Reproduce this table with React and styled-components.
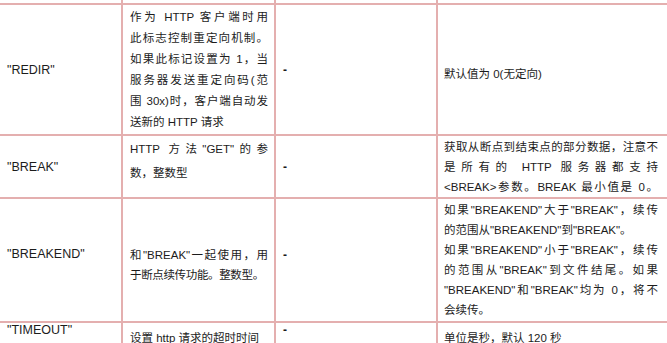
import React from "react";
import styled, { createGlobalStyle } from "styled-components";

const GlobalStyle = createGlobalStyle`
  html, body {
    margin: 0;
    padding: 0;
    background: #fff;
    overflow: hidden;
  }
`;

const Page = styled.div`
  width: 667px;
  height: 343px;
  overflow: hidden;
  background: #fff;
  font-family: "Liberation Sans", "Noto Sans CJK SC", sans-serif;
  color: #1c1c1c;
`;

const Table = styled.table`
  border-collapse: collapse;
  table-layout: fixed;
  width: 673px;
  margin: -13px 0 0 -5px;
`;

const Col = styled.col`
  width: ${props => props.$w}px;
`;

const Cell = styled.td`
  border: 2px solid #e4afaf;
  padding: ${props => props.$pad || "1px 7px 1px 7px"};
  vertical-align: ${props => props.$valign || "middle"};
  font-size: 11.5px;
  line-height: ${props => props.$lh || "20px"};
  overflow: hidden;
`;

const Key = styled(Cell)`
  font-size: 12.5px;
  padding-left: 10px;
`;

const Line = styled.div`
  text-align: justify;
  text-align-last: ${props => (props.$last ? "left" : "justify")};
  letter-spacing: ${props => (props.$squeeze ? "-0.35px" : "normal")};
`;

const Dash = styled.span`
  font-size: 12px;
  font-weight: bold;
`;

function App() {
  return (
    <Page>
      <GlobalStyle />
      <Table>
        <colgroup>
          <Col $w={126} />
          <Col $w={153} />
          <Col $w={162} />
          <Col $w={232} />
        </colgroup>
        <tbody>
          <tr>
            <Key $lh="14px" $pad="0" />
            <Cell $lh="14px" $valign="bottom" $pad="0 7px 0 7px">
              PORT
            </Cell>
            <Cell $lh="14px" />
            <Cell $lh="14px" />
          </tr>
          <tr>
            <Key>"REDIR"</Key>
            <Cell $lh="21px" $pad="2px 6px 1px 7px">
              <Line>作为 HTTP 客户端时用</Line>
              <Line>此标志控制重定向机制。</Line>
              <Line>如果此标记设置为 1，当</Line>
              <Line>服务器发送重定向码(范</Line>
              <Line>围 30x)时，客户端自动发</Line>
              <Line $last>送新的 HTTP 请求</Line>
            </Cell>
            <Cell>
              <Dash>-</Dash>
            </Cell>
            <Cell $pad="9px 10px 1px 6px">默认值为 0(无定向)</Cell>
          </tr>
          <tr>
            <Key>"BREAK"</Key>
            <Cell $valign="top" $lh="24px" $pad="1px 6px 0 7px">
              <Line>HTTP 方法"GET"的参</Line>
              <Line $last>数，整数型</Line>
            </Cell>
            <Cell>
              <Dash>-</Dash>
            </Cell>
            <Cell $pad="1px 10px 0 6px">
              <Line>获取从断点到结束点的部分数据，注意不</Line>
              <Line>是所有的 HTTP 服务器都支持</Line>
              <Line>&lt;BREAK&gt;参数。BREAK 最小值是 0。</Line>
            </Cell>
          </tr>
          <tr>
            <Key $pad="1px 7px 14px 10px">"BREAKEND"</Key>
            <Cell $pad="10px 6px 1px 7px">
              <Line>和"BREAK"一起使用，用</Line>
              <Line $last $squeeze>
                于断点续传功能。整数型。
              </Line>
            </Cell>
            <Cell $pad="1px 7px 12px 7px">
              <Dash>-</Dash>
            </Cell>
            <Cell $pad="1px 10px 1px 6px">
              <Line>如果"BREAKEND"大于"BREAK"，续传</Line>
              <Line $last>的范围从"BREAKEND"到"BREAK"。</Line>
              <Line>如果"BREAKEND"小于"BREAK"，续传</Line>
              <Line>的范围从"BREAK"到文件结尾。如果</Line>
              <Line>"BREAKEND"和"BREAK"均为 0，将不</Line>
              <Line $last>会续传。</Line>
            </Cell>
          </tr>
          <tr>
            <Key $valign="top" $lh="14px" $pad="0 7px 20px 10px">
              "TIMEOUT"
            </Key>
            <Cell $valign="top" $pad="5px 6px 10px 7px">
              <Line $last>设置 http 请求的超时时间</Line>
            </Cell>
            <Cell $valign="top" $lh="14px" $pad="0 7px 10px 7px">
              <Dash>-</Dash>
            </Cell>
            <Cell $valign="top" $pad="5px 10px 10px 6px">
              单位是秒，默认 120 秒
            </Cell>
          </tr>
        </tbody>
      </Table>
    </Page>
  );
}

export default App;
